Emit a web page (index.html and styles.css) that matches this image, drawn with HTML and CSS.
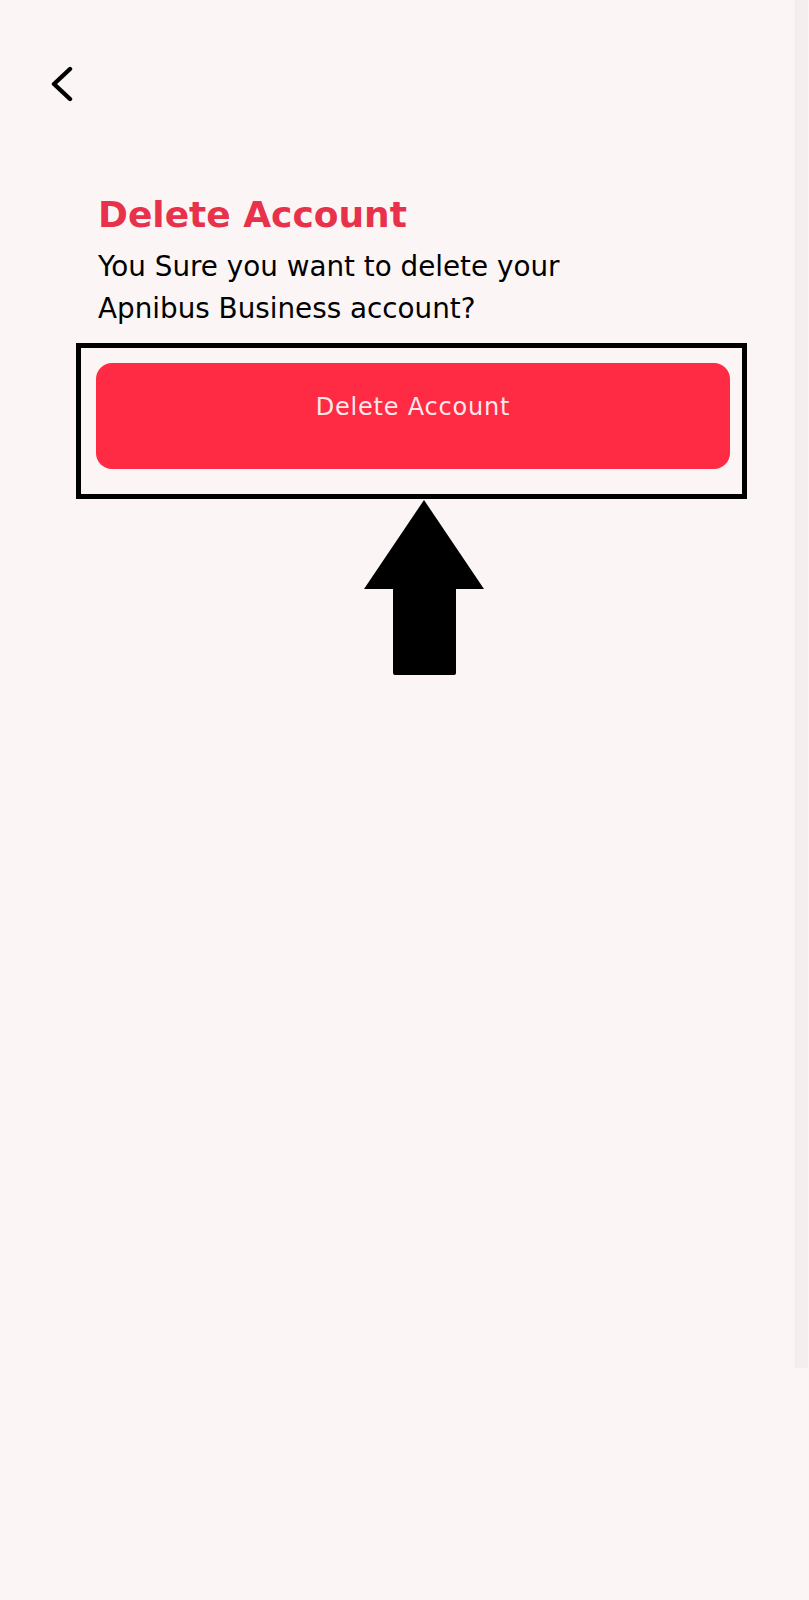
FILE: index.html
```html
<!DOCTYPE html>
<html lang="en">
<head>
<meta charset="utf-8">
<title>Delete Account</title>
<link rel="stylesheet" href="styles.css">
</head>
<body>
<div class="screen">
  <header class="topbar">
    <button class="back" aria-label="Back">
      <svg width="24" height="38" viewBox="0 0 24 38">
        <polyline points="20,3 4,18 20,33" fill="none" stroke="#000" stroke-width="4.4" stroke-linecap="round" stroke-linejoin="round"/>
      </svg>
    </button>
  </header>
  <main class="content">
    <h1 class="title">Delete Account</h1>
    <p class="desc">You Sure you want to delete your<br>Apnibus Business account?</p>
  </main>
  <div class="highlight">
    <button class="delete-btn">Delete Account</button>
  </div>
  <div class="pointer">
    <svg width="121" height="176" viewBox="0 0 121 176">
      <path d="M60 0 L120 89 L92 89 L92 173 Q92 175 90 175 L31 175 Q29 175 29 173 L29 89 L0 89 Z" fill="#000"/>
    </svg>
  </div>
</div>
<div class="scroll-track"></div>
</body>
</html>
```

FILE: styles.css
```css
html, body {
  margin: 0;
  padding: 0;
  background: #fbf5f5;
}
body {
  font-family: "DejaVu Sans", "Liberation Sans", sans-serif;
  color: #000;
  min-height: 1600px;
}
.screen {
  display: flex;
  flex-direction: column;
}
.topbar {
  padding: 66px 0 0 50px;
  height: 38px;
}
.back {
  background: none;
  border: 0;
  padding: 0;
  margin: 0;
  display: block;
  cursor: pointer;
}
.back svg { display: block; }
.content {
  padding: 90px 0 0 98px;
}
.title {
  margin: 0;
  font-size: 36px;
  line-height: 42px;
  font-weight: 700;
  color: #e8324b;
}
.desc {
  margin: 10px 0 0;
  font-size: 27.8px;
  line-height: 42px;
  font-weight: 400;
}
.highlight {
  margin: 13px 0 0 76px;
  width: 671px;
  box-sizing: border-box;
  border: 5px solid #000;
  padding: 15px 12px 25px 15px;
}
.delete-btn {
  display: flex;
  align-items: center;
  justify-content: center;
  width: 100%;
  height: 106px;
  border: 0;
  border-radius: 16px;
  background: #ff2a43;
  color: #fde8eb;
  font-family: "DejaVu Sans", "Liberation Sans", sans-serif;
  font-size: 24px;
  letter-spacing: 0.8px;
  font-weight: 400;
  padding: 0 0 18px;
  cursor: pointer;
}
.pointer {
  margin: 1px 0 0 364px;
}
.pointer svg { display: block; }
.scroll-track {
  position: absolute;
  top: 0;
  right: 1px;
  width: 12px;
  height: 1368px;
  background: #f4eeee;
  border-left: 1px solid #efe9e9;
}
```
